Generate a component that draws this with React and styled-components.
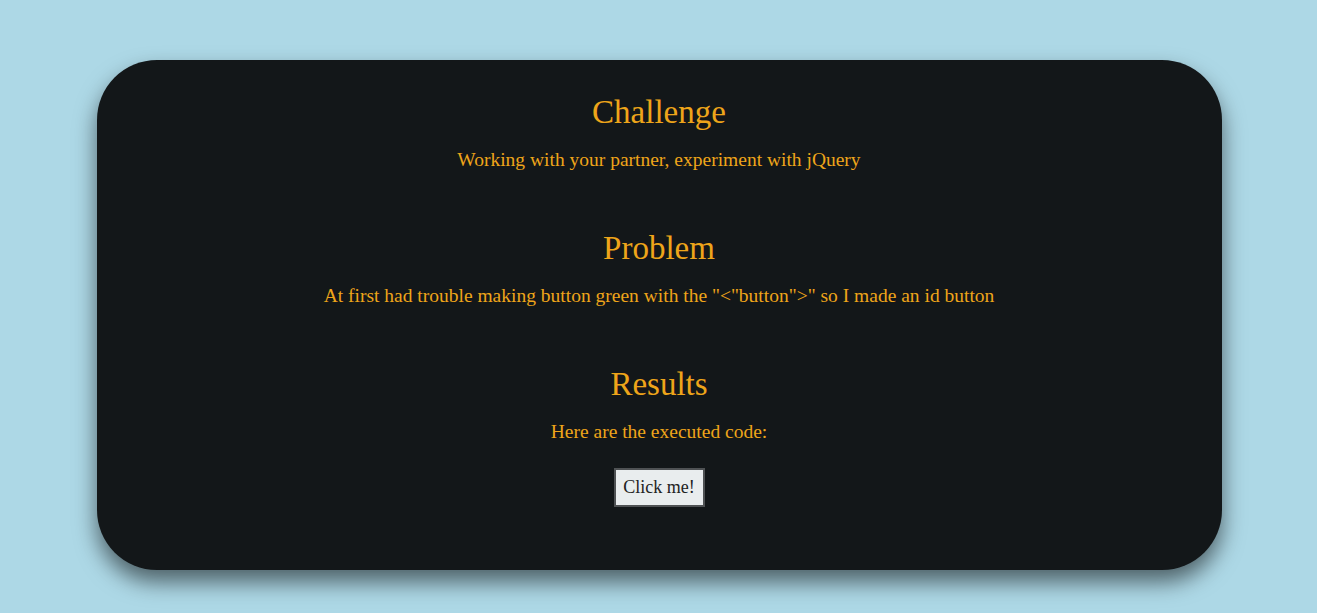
import React from "react";
import styled, { createGlobalStyle } from "styled-components";

const GlobalStyle = createGlobalStyle`
  html, body {
    margin: 0;
    padding: 0;
    background-color: #add8e6;
    font-family: "Liberation Serif", "Times New Roman", serif;
  }
`;

const Page = styled.div`
  padding: 60px 0 43px 1px;
  display: flex;
  justify-content: center;
`;

const Card = styled.main`
  width: 1125px;
  height: 510px;
  box-sizing: border-box;
  padding-top: 32px;
  background-color: #131719;
  border-radius: 60px;
  box-shadow: 0 12px 22px rgba(0, 0, 0, 0.55);
  display: flex;
  flex-flow: column;
  align-items: center;
  gap: 56px;
`;

const Section = styled.section`
  display: flex;
  flex-flow: column;
  align-items: center;
  gap: 16px;
`;

const Heading = styled.h2`
  margin: 0;
  font-size: 33px;
  line-height: 40px;
  font-weight: 400;
  color: #eea51a;
`;

const Text = styled.p`
  margin: 0;
  font-size: 19.5px;
  line-height: 24px;
  color: #eea51a;
`;

const Button = styled.button`
  margin-top: 8px;
  height: 39px;
  width: 91px;
  padding: 0;
  font-family: inherit;
  font-size: 18px;
  color: #222;
  background-color: #e9edee;
  border: 2px solid #4f5254;
  cursor: pointer;
`;

const sections = [
  { title: "Challenge", text: "Working with your partner, experiment with jQuery" },
  {
    title: "Problem",
    text: 'At first had trouble making button green with the "<"button">" so I made an id button',
  },
];

export default function App() {
  return (
    <>
      <GlobalStyle />
      <Page>
        <Card>
          {sections.map((s) => (
            <Section key={s.title}>
              <Heading>{s.title}</Heading>
              <Text>{s.text}</Text>
            </Section>
          ))}
          <Section>
            <Heading>Results</Heading>
            <Text>Here are the executed code:</Text>
            <Button id="button">Click me!</Button>
          </Section>
        </Card>
      </Page>
    </>
  );
}
